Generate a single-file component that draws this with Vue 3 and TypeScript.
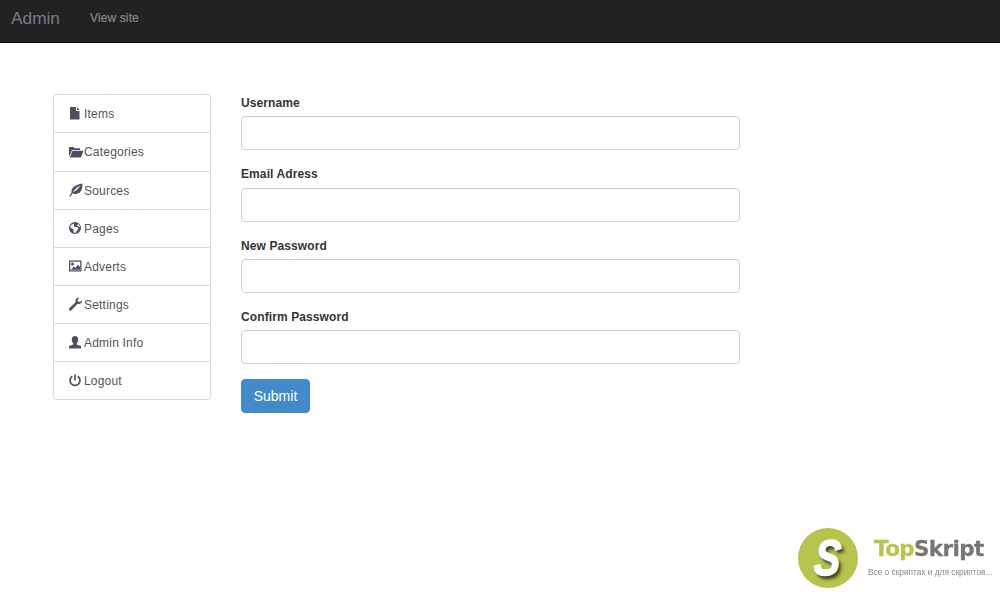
<script setup lang="ts">
interface Item { label: string; icon: string; h: number }
const items: Item[] = [
  { label: 'Items', icon: 'file', h: 38 },
  { label: 'Categories', icon: 'folder', h: 39 },
  { label: 'Sources', icon: 'leaf', h: 38 },
  { label: 'Pages', icon: 'globe', h: 38 },
  { label: 'Adverts', icon: 'picture', h: 38 },
  { label: 'Settings', icon: 'wrench', h: 38 },
  { label: 'Admin Info', icon: 'user', h: 38 },
  { label: 'Logout', icon: 'off', h: 38 },
]
const fields: string[] = ['Username', 'Email Adress', 'New Password', 'Confirm Password']
</script>

<template>
  <div class="page">
    <header class="navbar">
      <a class="brand">Admin</a>
      <a class="navlink">View site</a>
    </header>
    <main class="content">
      <nav class="list">
        <a v-for="item in items" :key="item.label" class="item" :class="'h' + item.h">
          <svg class="icon" viewBox="0 0 14 14" aria-hidden="true">
            <path v-if="item.icon === 'file'" fill-rule="evenodd" d="M1 1h6v4h3.500v8.500H1zM8 1l2.500 3H8z" />
            <path v-else-if="item.icon === 'folder'" d="M0 2.500 .5 2h4l1 1.200H11V5H3L.8 10.500H0zM3.500 5.800H14.500L12 12.500H.8z" />
            <path v-else-if="item.icon === 'leaf'" d="M13.500 .5C13.500 7 11.500 11 6 11c-1 0-2-.3-2.500-.7L1.500 13.500H.2l2.300-4C2 4.500 6 2 13.500 .5zM11.500 2.500C8 4 5.500 6.500 4 9.500 7 7.500 9.500 5.500 11.500 2.500z" />
            <path v-else-if="item.icon === 'globe'" fill-rule="evenodd" d="M6 1a6 6 0 1 1 0 12A6 6 0 0 1 6 1zM5 2.500 2 4l-.8 2.500L4 8l1 3.500 1.500.5L8 9.500 9.500 8 8.500 6 5.500 6 5 4.500zM9 3 8 4.500l2 1.200 1 .5C10.800 4.800 10 3.800 9 3z" />
            <path v-else-if="item.icon === 'picture'" fill-rule="evenodd" d="M0 1.500h12.500v11H0zM1.300 2.800v8.400h9.900V2.800zM1.800 10.800l3-3.300 1.500 1.400L9 5.500l2 2.500v2.800zM3.500 3.500a1.500 1.500 0 1 1 0 3 1.500 1.500 0 0 1 0-3z" />
            <path v-else-if="item.icon === 'wrench'" d="M13 3.200 10.800 5 9 4.500 8.500 2.800 10.500 .8C8.500 .2 6.500 1.500 6.500 3.700c0 .5.100.9.300 1.300L.4 11.300a1.400 1.400 0 0 0 2 2L8.500 6.800c2.500.8 5-1 4.500-3.600z" />
            <path v-else-if="item.icon === 'user'" d="M6 1c2.200 0 3.200 1.500 3.200 3.500 0 1.500-.6 3-1.400 3.700v1.200L12 11v2.500H0V11l4.200-1.600V8.200C3.400 7.500 2.800 6 2.800 4.500 2.800 2.500 3.800 1 6 1z" />
            <path v-else fill="none" stroke="currentColor" stroke-width="1.700" d="M3.300 3.200a5 5 0 1 0 5.400 0M6 1.500v6" />
          </svg>
          <span>{{ item.label }}</span>
        </a>
      </nav>
      <form class="form" @submit.prevent>
        <div v-for="f in fields" :key="f" class="group">
          <label class="label">{{ f }}</label>
          <input class="input" type="text" />
        </div>
        <button class="submit" type="submit">Submit</button>
      </form>
    </main>
    <aside class="mark">
      <div class="disc"><span class="s">S</span></div>
      <div class="marktext">
        <div class="wordmark"><span class="top">Top</span><span class="skript">Skript</span></div>
        <div class="tag">Все о скриптах и для скриптов...</div>
      </div>
    </aside>
  </div>
</template>

<style>
html, body { margin: 0; background: #fff; }
</style>

<style scoped>
.page {
  position: relative;
  height: 595px;
  overflow: hidden;
  font-family: "Liberation Sans", Arial, sans-serif;
  font-size: 12px;
  color: #333;
}
.navbar {
  box-sizing: border-box;
  height: 43px;
  background: #222;
  border-bottom: 1px solid #080808;
  display: flex;
  align-items: center;
  padding-left: 11px;
}
.brand { font-size: 17.300px; color: #7d7a88; width: 79px; position: relative; top: -3px; }
.navlink { font-size: 12px; color: #8a8490; position: relative; top: -3px; letter-spacing: .12px; -webkit-text-stroke: .2px #8a8490; }
.content {
  display: flex;
  align-items: flex-start;
  gap: 30px;
  padding: 51px 0 0 53px;
}
.list {
  box-sizing: border-box;
  width: 158px;
  border: 1px solid #d3dada;
  border-radius: 4px;
  color: #555;
}
.item {
  box-sizing: border-box;
  display: flex;
  align-items: center;
  height: 38px;
  padding-left: 15px;
  letter-spacing: .2px;
  border-bottom: 1px solid #d3dada;
}
.item.h39 { height: 39px; }
.item:last-child { border-bottom: 0; height: 37px; }
.icon { width: 14px; height: 14px; margin-right: 1px; fill: #514e63; color: #514e63; flex: none; margin-top: -1px; overflow: visible; }
.form { width: 499px; padding-top: .29px; }
.group { margin-bottom: 15px; }
.label {
  display: block;
  height: 17.200px;
  line-height: 18px;
  margin-bottom: 5px;
  font-weight: 700;
  letter-spacing: .1px;
  color: #3a3333;
}
.input {
  display: block;
  box-sizing: border-box;
  width: 100%;
  height: 34px;
  border: 1px solid #d0d2d0;
  border-radius: 4px;
  background: #fff;
  box-shadow: inset 0 1px 1px rgba(0,0,0,.03);
  outline: 0;
}
.submit {
  display: block;
  box-sizing: border-box;
  width: 69px;
  height: 34px;
  padding: 0;
  border: 1px solid #428bca;
  border-radius: 4px;
  background: #428bca;
  color: #fff;
  font-family: inherit;
  font-size: 14px;
}
.mark {
  position: absolute;
  left: 798px;
  top: 528px;
  display: flex;
  gap: 10px;
}
.disc {
  width: 60px;
  height: 60px;
  border-radius: 50%;
  background: #b7c44d;
  display: flex;
  align-items: center;
  justify-content: center;
}
.s {
  display: inline-block;
  font-family: "Liberation Sans", sans-serif;
  font-weight: 700;
  font-style: italic;
  font-size: 50px;
  line-height: 1;
  color: #fff;
  -webkit-text-stroke: 1.500px #fff;
  text-shadow: 3px 3px 3px #3e4420, 5px 4px 4px rgba(62,68,32,.5);
  transform: scaleX(.78) skewX(-6deg);
}
.marktext { width: 130px; }
.wordmark {
  font-family: "DejaVu Sans", sans-serif;
  font-weight: 700;
  font-size: 21.500px;
  line-height: 24px;
  margin: 9px 0 0 6px;
  letter-spacing: -.65px;
  -webkit-text-stroke: .3px currentColor;
  filter: blur(.3px);
}
.top { color: #b7c44d; }
.skript { color: #767676; }
.tag {
  font-size: 8.300px;
  line-height: 12px;
  margin-top: 5px;
  color: #888;
  white-space: nowrap;
  filter: blur(.25px);
}
</style>
